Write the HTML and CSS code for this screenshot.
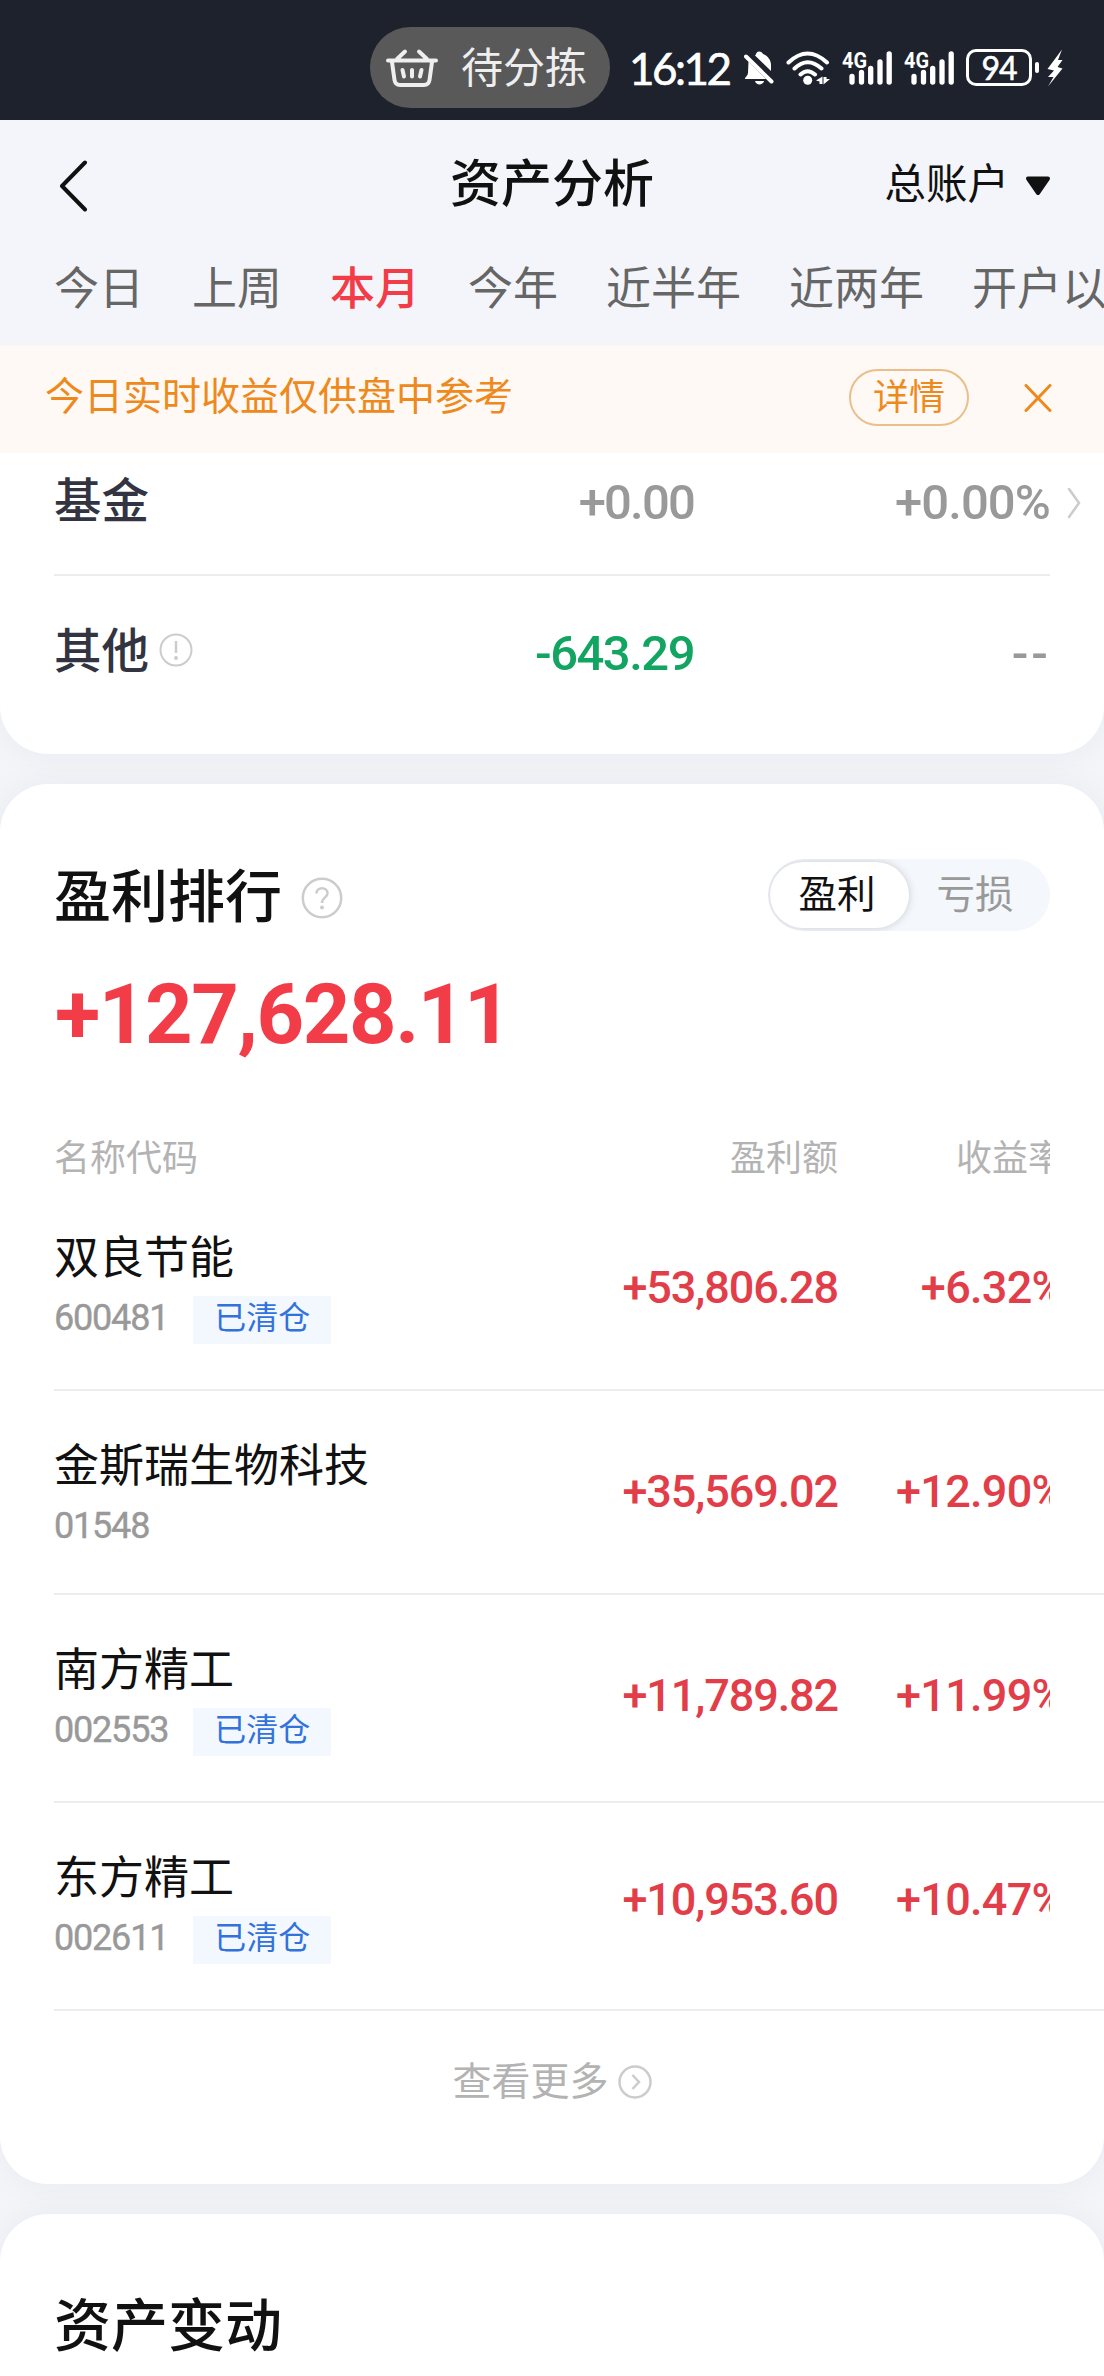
FILE: index.html
```html
<!DOCTYPE html>
<html lang="zh-CN">
<head>
    <meta charset="UTF-8">
    <meta name="viewport" content="width=device-width, initial-scale=1.0">
    <title>资产分析</title>
    <link rel="stylesheet" href="styles.css">
</head>
<body>
    <!-- Barra de estado -->
    <div class="status-bar">
        <div class="status-pill">
            <svg width="54" height="40" viewBox="0 0 54 40" fill="none" stroke="#eee" stroke-width="4" stroke-linecap="round" stroke-linejoin="round">
                <path d="M3 12.5H51M12 11L20 3.5M42 11L34 3.5M7 14L9.5 32Q10.300 37 15 37H39Q43.700 37 44.500 32L47 14M17.500 22L19 28.500M27 22V28.500M36.500 22L35 28.500"/>
            </svg>
            <span>待分拣</span>
        </div>
        <span class="clock">16:12</span>
        <svg width="30" height="34" viewBox="0 0 30 34" fill="#fff">
            <path d="M15 0.500C17 0.500 18.500 1.500 19 3C24 5 27 9 27 14V20L11 4.500C11.500 4 12 3.500 12 3C12.500 1.500 13.500 0.500 15 0.500ZM4.500 10.500L22 28H1C0.500 26.500 4 24.500 4 22ZM11 30H20C19 34.500 12 34.500 11 30Z"/>
            <path d="M2 5.500L27.500 30.500" stroke="#fff" stroke-width="4" stroke-linecap="round"/>
        </svg>
        <svg width="44" height="34" viewBox="0 0 44 34" fill="none" stroke="#fff" stroke-width="4" stroke-linecap="round">
            <path d="M2.500 11.500Q21.500 -6.500 41 11.500M8.500 17.500Q21.500 5 35.500 17.500M14.500 23.500Q21.500 17 29 23.500"/>
            <circle cx="21.700" cy="29.300" r="4.500" fill="#fff" stroke="none"/>
            <path d="M30 29.500L36.500 25.500V33H33.500V30.500ZM37.500 26H40.500V28H44L37.500 33.500Z" fill="#fff" stroke="none"/>
        </svg>
        <svg class="signal" width="50" height="36" viewBox="0 0 50 36">
            <text x="0" y="17.500" textLength="25" lengthAdjust="spacingAndGlyphs">4G</text>
            <path d="M10 26.500V32M19.500 22.500V32M28.700 18.500V32M38 12V32M47.200 4V32"/>
        </svg>
        <svg class="signal" width="50" height="36" viewBox="0 0 50 36">
            <text x="0" y="17.500" textLength="25" lengthAdjust="spacingAndGlyphs">4G</text>
            <path d="M10 26.500V32M19.500 22.500V32M28.700 18.500V32M38 12V32M47.200 4V32"/>
        </svg>
        <div class="battery"><span>94</span></div>
        <svg class="bolt" width="16" height="38" viewBox="0 0 16 38" fill="#fff">
            <path d="M15 0.500L0.500 20L7 21.500L1 28H6.500L1 37.500L15.500 19.500L10.500 18L15.500 11H11Z"/>
        </svg>
    </div>

    <header class="header">
        <div class="title-bar">
            <svg class="back" width="30" height="52" viewBox="0 0 30 52" fill="none" stroke="#111" stroke-width="4" stroke-linecap="round" stroke-linejoin="round">
                <path d="M26 2.500L3 26L26 49.500"/>
            </svg>
            <h1>资产分析</h1>
            <div class="account">
                <span>总账户</span>
                <svg width="26" height="20" viewBox="0 0 26 20" fill="#111" stroke="#111" stroke-width="4" stroke-linejoin="round">
                    <path d="M3 2.500H23L13 17Z"/>
                </svg>
            </div>
        </div>
        <nav class="tabs">
            <span>今日</span>
            <span>上周</span>
            <span class="active">本月</span>
            <span>今年</span>
            <span>近半年</span>
            <span>近两年</span>
            <span>开户以来</span>
        </nav>
    </header>

    <div class="notice">
        <span class="notice-text">今日实时收益仅供盘中参考</span>
        <span class="notice-btn">详情</span>
        <svg width="28" height="28" viewBox="0 0 28 28" fill="none" stroke="#ee8a1d" stroke-width="3" stroke-linecap="round">
            <path d="M2 1.500L26 26.500M26 1.500L2 26.500"/>
        </svg>
    </div>

    <section class="card card-assets">
        <div class="asset-row">
            <span class="asset-name">基金</span>
            <span class="num">+0.00</span>
            <span class="num rate">+0.00%</span>
            <svg class="more" width="14" height="32" viewBox="0 0 14 32" fill="none" stroke="#ccc" stroke-width="2.500" stroke-linecap="round">
                <path d="M2 2L12 16L2 30"/>
            </svg>
        </div>
        <div class="asset-row">
            <span class="asset-name">其他
                <svg width="34" height="34" viewBox="0 0 34 34" fill="none" stroke="#ccc" stroke-width="2">
                    <circle cx="17" cy="17" r="15.500"/>
                    <path d="M17 8V20" stroke-width="2.500"/>
                    <circle cx="17" cy="25" r="2" fill="#ccc" stroke="none"/>
                </svg>
            </span>
            <span class="num green">-643.29</span>
            <span class="num dashes">--</span>
        </div>
    </section>

    <section class="card card-rank">
        <div class="rank-head">
            <h2>盈利排行</h2>
            <svg width="42" height="42" viewBox="0 0 42 42" fill="none" stroke="#ccc" stroke-width="2.500">
                <circle cx="21" cy="21" r="19.200"/>
                <path d="M15.500 16.500C15.500 9.500 26.500 9.500 26.500 16.500C26.500 20.500 21 20.500 21 26"/>
                <circle cx="21" cy="30.500" r="2" fill="#ccc" stroke="none"/>
            </svg>
            <div class="toggle">
                <span class="on">盈利</span>
                <span>亏损</span>
            </div>
        </div>
        <div class="total">+127,628.11</div>

        <div class="board">
            <div class="names">
                <div class="names-head">名称代码</div>
                <div class="stock">
                    <div class="stock-name">双良节能</div>
                    <div class="stock-code">600481<span class="tag">已清仓</span></div>
                </div>
                <div class="stock">
                    <div class="stock-name">金斯瑞生物科技</div>
                    <div class="stock-code plain">01548</div>
                </div>
                <div class="stock">
                    <div class="stock-name">南方精工</div>
                    <div class="stock-code">002553<span class="tag">已清仓</span></div>
                </div>
                <div class="stock">
                    <div class="stock-name">东方精工</div>
                    <div class="stock-code">002611<span class="tag">已清仓</span></div>
                </div>
            </div>
            <div class="values">
                <div class="values-row values-head"><span>盈利额</span><span>收益率</span></div>
                <div class="values-row"><span>+53,806.28</span><span>+6.32%</span></div>
                <div class="values-row"><span>+35,569.02</span><span>+12.90%</span></div>
                <div class="values-row"><span>+11,789.82</span><span>+11.99%</span></div>
                <div class="values-row"><span>+10,953.60</span><span>+10.47%</span></div>
            </div>
        </div>

        <div class="view-more">
            <span>查看更多</span>
            <svg width="34" height="34" viewBox="0 0 34 34" fill="none" stroke="#ccc" stroke-width="2.500">
                <circle cx="17" cy="17" r="15.500"/>
                <path d="M14.500 10L21 17L14.500 24"/>
            </svg>
        </div>
    </section>

    <section class="card card-change">
        <h2>资产变动</h2>
    </section>
</body>
</html>
```

FILE: styles.css
```css
:root {
    --red: #f23c48;
    --green: #12a561;
    --orange: #ee8a1d;
    --dark: #111;
    --grey: #999;
    --light-grey: #b3b3b3;
    --line: #ededed;
}

* {
    box-sizing: border-box;
}

body {
    margin: 0;
    width: 1104px;
    height: 2376px;
    overflow: hidden;
    background: #f3f5f9;
    color: var(--dark);
    font-family: "Noto Sans CJK SC", sans-serif;
    white-space: nowrap;
}

h1, h2 {
    margin: 0;
    font-weight: 500;
}

svg {
    display: block;
    flex: none;
}

/* Barra de estado */
.status-bar {
    display: flex;
    align-items: center;
    justify-content: flex-end;
    gap: 12px;
    height: 120px;
    padding: 15px 41px 0 0;
    background: #1e222d;
    color: #fff;
}

.status-pill {
    display: flex;
    align-items: center;
    gap: 22px;
    width: 240px;
    height: 81px;
    padding-left: 15px;
    border-radius: 41px;
    background: #595959;
    color: #eee;
    font-size: 42px;
    line-height: 76px;
}

.status-pill span {
    padding-bottom: 5px;
}

.clock {
    width: 98px;
    margin: 0 5px 0 7px;
    font: 400 44px/60px Lato, sans-serif;
    letter-spacing: -2.500px;
    -webkit-text-stroke: 0.600px #fff;
}

.signal {
    overflow: visible;
    fill: none;
    stroke: #fff;
    stroke-width: 5.300;
    stroke-linecap: round;
}

.signal text {
    fill: #fff;
    stroke: none;
    font: 700 22px Roboto, sans-serif;
}

.battery {
    position: relative;
    width: 66px;
    height: 37px;
    margin-right: 7px;
    border: 3px solid #fff;
    border-radius: 10px;
    text-align: center;
    font: 400 32px/31px Lato, sans-serif;
    letter-spacing: -1px;
    -webkit-text-stroke: 0.600px #fff;
}

.battery::after {
    content: "";
    position: absolute;
    right: -10px;
    top: 10px;
    width: 4px;
    height: 11px;
    border-radius: 2px;
    background: #fff;
}

.bolt {
    margin-left: -4px;
}

/* Cabecera */
.header {
    height: 225px;
    background: #f4f5fa;
}

.title-bar {
    display: grid;
    grid-template-columns: 1fr auto 1fr;
    align-items: center;
    height: 122px;
    padding: 0 53px 0 59px;
}

.back {
    margin-top: 9px;
}

.title-bar h1 {
    font-size: 51px;
    line-height: 76px;
    margin: -3px 6px 0 0;
}

.account {
    display: flex;
    align-items: center;
    justify-content: flex-end;
    gap: 16px;
    font-size: 41.500px;
    line-height: 76px;
}

.account svg {
    margin-top: 9px;
}

.tabs {
    display: flex;
    gap: 48px;
    overflow: hidden;
    padding-left: 54px;
    color: #666;
    font-size: 45px;
    line-height: 88px;
}

.tabs .active {
    color: var(--red);
    font-weight: 500;
}

/* Aviso, fijo por encima de las tarjetas */
.notice {
    position: relative;
    z-index: 1;
    display: flex;
    align-items: center;
    height: 108px;
    padding: 0 52px 3px 45px;
    background: #fef9f4;
    color: var(--orange);
    font-size: 39px;
}

.notice-text {
    flex: 1;
    line-height: 76px;
    padding-bottom: 9px;
}

.notice-btn {
    width: 120px;
    height: 57px;
    margin-right: 55px;
    border: 2px solid #eabf8b;
    border-radius: 29px;
    text-align: center;
    font-size: 36px;
    line-height: 46px;
}

/* Tarjetas */
.card {
    border-radius: 48px;
    background: #fff;
    box-shadow: 0 0 36px rgba(30, 30, 60, 0.05);
}

.card h2 {
    font-size: 57px;
    line-height: 84px;
}

.card-assets {
    height: 301px;
    padding: 0 54px;
    border-radius: 0 0 48px 48px;
}

.asset-row {
    position: relative;
    display: grid;
    grid-template-columns: 308px 332px 356px;
    align-items: center;
    height: 149px;
}

.asset-row:first-child {
    height: 123px;
    padding-bottom: 27px;
    border-bottom: 2px solid var(--line);
}

.asset-name {
    display: flex;
    align-items: center;
    gap: 10px;
    color: #323541;
    font-size: 47.500px;
    font-weight: 500;
    line-height: 80px;
    padding-bottom: 5px;
}

.asset-name svg {
    margin-top: 4px;
}

.num {
    text-align: right;
    color: var(--grey);
    font: 500 49px/60px Roboto, sans-serif;
    letter-spacing: -1.800px;
    padding-top: 6px;
}

.num.rate {
    letter-spacing: -0.900px;
}

.num.green {
    color: var(--green);
    letter-spacing: -1.500px;
}

.num.dashes {
    letter-spacing: 3px;
    margin-right: -1px;
}

.more {
    position: absolute;
    right: -31px;
    top: 34px;
}

.card-rank {
    height: 1400px;
    margin-top: 30px;
    padding-top: 66px;
    overflow: hidden;
}

.rank-head {
    display: flex;
    align-items: center;
    height: 90px;
    padding: 0 54px;
}

.rank-head h2 {
    padding-bottom: 6px;
}

.rank-head svg {
    margin: 6px auto 0 19px;
}

.toggle {
    display: flex;
    width: 282px;
    height: 72px;
    padding: 3px 2px;
    border-radius: 36px;
    overflow: hidden;
    background: #f4f7fb;
    color: var(--grey);
    font-size: 38.500px;
    line-height: 58px;
    text-align: center;
}

.toggle span {
    flex: 1;
    padding-right: 7px;
}

.toggle .on {
    flex: none;
    width: 139px;
    padding: 0 5px 0 0;
    border-radius: 33px;
    background: #fff;
    box-shadow: 0 0 8px rgba(0, 0, 0, 0.18);
    color: var(--dark);
}

.total {
    padding-left: 55px;
    color: var(--red);
    font: 700 83px/100px Roboto, sans-serif;
    letter-spacing: -1.400px;
    margin: 25px 0 54px;
}

/* Ranking: nombres a la izquierda, valores encima a la derecha */
.board {
    display: grid;
}

.names, .values {
    grid-area: 1 / 1;
}

.names {
    padding-left: 54px;
}

.names-head {
    height: 64px;
    color: var(--light-grey);
    font-size: 36px;
    line-height: 72px;
}

.stock {
    height: 208px;
    padding-top: 41px;
    border-bottom: 2px solid var(--line);
}

.stock:has(.plain) {
    height: 204px;
}

.stock-name {
    font-size: 45px;
    line-height: 62px;
}

.stock-code {
    display: flex;
    align-items: flex-start;
    height: 48px;
    margin-top: 10px;
    color: var(--grey);
    font: 400 36px/45px Roboto, sans-serif;
    letter-spacing: -1.200px;
    -webkit-text-stroke: 0.400px var(--grey);
}

.tag {
    width: 138px;
    height: 48px;
    margin-left: 25px;
    background: #f3f8ff;
    color: #3272dc;
    text-align: center;
    font: 400 32px/39px "Noto Sans CJK SC", sans-serif;
    letter-spacing: 0;
    -webkit-text-stroke: 0;
}

.values {
    justify-self: end;
    width: 450px;
    margin-right: 54px;
    overflow: hidden;
}

.values-row {
    display: grid;
    grid-template-columns: 238px 226px;
    height: 204px;
    padding-top: 5px;
    align-items: center;
    text-align: right;
    color: #e23e49;
    font: 500 45px/60px Roboto, sans-serif;
    letter-spacing: -1.100px;
}

.values-row span + span {
    letter-spacing: -0.700px;
}

.values-head {
    height: 64px;
    padding-top: 0;
    color: var(--light-grey);
    font: 400 36px/72px "Noto Sans CJK SC", sans-serif;
    letter-spacing: 0;
}

.values-head span + span {
    letter-spacing: 0;
}

.view-more {
    display: flex;
    align-items: center;
    justify-content: center;
    gap: 9px;
    height: 134px;
    color: var(--light-grey);
    font-size: 39px;
    line-height: 60px;
}

.view-more svg {
    margin-top: 8px;
}

.card-change {
    height: 240px;
    margin-top: 30px;
    padding: 65px 54px;
}
```
